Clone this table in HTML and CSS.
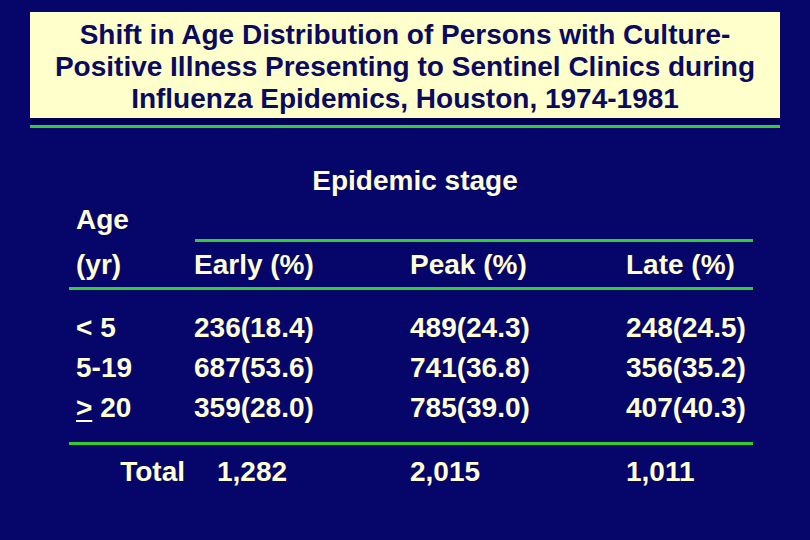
FILE: index.html
```html
<!DOCTYPE html>
<html lang="en">
<head>
<meta charset="utf-8">
<title>Shift in Age Distribution</title>
<link rel="stylesheet" href="styles.css">
</head>
<body>
<div class="slide">
  <header class="title-wrap">
    <h1 class="title">Shift in Age Distribution of Persons with Culture-<br>Positive Illness Presenting to Sentinel Clinics during<br>Influenza Epidemics, Houston, 1974-1981</h1>
    <div class="title-shadow"></div>
    <div class="title-rule"></div>
  </header>

  <section class="table">
    <div class="row stage-row"><div class="stage">Epidemic stage</div></div>
    <div class="row age-row"><div class="c1">Age</div></div>
    <div class="rule rule-top"></div>
    <div class="row head-row">
      <div class="c1">(yr)</div>
      <div>Early (%)</div>
      <div>Peak (%)</div>
      <div>Late (%)</div>
    </div>
    <div class="rule"></div>
    <div class="body">
      <div class="row data-row">
        <div class="c1">&lt; 5</div>
        <div>236(18.4)</div>
        <div>489(24.3)</div>
        <div>248(24.5)</div>
      </div>
      <div class="row data-row">
        <div class="c1">5-19</div>
        <div>687(53.6)</div>
        <div>741(36.8)</div>
        <div>356(35.2)</div>
      </div>
      <div class="row data-row">
        <div class="c1"><u>&gt;</u> 20</div>
        <div>359(28.0)</div>
        <div>785(39.0)</div>
        <div>407(40.3)</div>
      </div>
    </div>
    <div class="rule rule-bottom"></div>
    <div class="row total-row">
      <div class="total-label">Total</div>
      <div class="total-first">1,282</div>
      <div>2,015</div>
      <div>1,011</div>
    </div>
  </section>
</div>
</body>
</html>
```
FILE: styles.css
```css
html, body {
  margin: 0;
  padding: 0;
}
body {
  background: #06066a;
  font-family: "Liberation Sans", Arial, sans-serif;
}
.slide {
  width: 810px;
  height: 540px;
  overflow: hidden;
  padding-top: 12px;
  box-sizing: border-box;
}
.title-wrap {
  margin: 0 30px;
}
.title {
  margin: 0;
  height: 106px;
  box-sizing: border-box;
  padding-top: 7px;
  background: #ffffcc;
  color: #0a0a5e;
  font-size: 28px;
  line-height: 32px;
  font-weight: bold;
  text-align: center;
}
.title-shadow {
  height: 6px;
  background: #00004e;
}
.title-rule {
  height: 3px;
  margin-top: 1px;
  background: #33cc33;
}

.table {
  margin: 33px 0 0 69px;
  width: 684px;
  color: #ffffd6;
  font-size: 28px;
  font-weight: bold;
}
.row {
  display: grid;
  grid-template-columns: 125px 216px 216px 127px;
  align-items: center;
}
.c1 {
  padding-left: 7px;
}
.stage-row {
  height: 40px;
  display: flex;
  justify-content: center;
}
.stage {
  padding-left: 8px;
}
.age-row {
  height: 38px;
}
.rule {
  height: 3px;
  background: #33cc33;
}
.rule-top {
  margin-left: 126px;
}
.head-row {
  height: 45px;
}
.body {
  padding: 18px 0 14px;
}
.data-row {
  height: 40px;
}
.total-row {
  height: 40px;
  margin-top: 7px;
}
.total-label {
  text-align: right;
  padding-right: 9px;
}
.total-first {
  padding-left: 23px;
}
u {
  text-decoration-thickness: 2px;
  text-underline-offset: 3px;
}
```
